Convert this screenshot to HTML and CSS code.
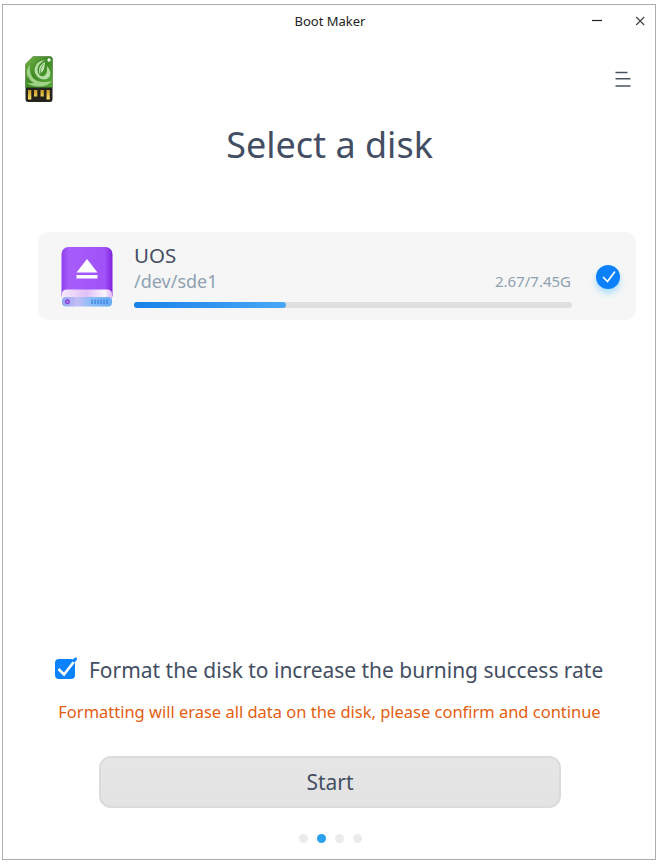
FILE: index.html
```html
<!DOCTYPE html>
<html lang="en">
<head>
<meta charset="utf-8">
<title>Boot Maker</title>
<link rel="stylesheet" href="styles.css">
</head>
<body>
<div class="window">
  <header class="titlebar">
    <span class="caption">Boot Maker</span>
    <svg class="controls" width="60" height="20" viewBox="0 0 60 20"><path d="M0 7.500h10" stroke="#222" stroke-width="1.200"/><path d="M44.200 4l8 8M52.200 4l-8 8" stroke="#444" stroke-width="1.200"/></svg>
  </header>
  <div class="toolbar">
    <svg class="logo" width="28" height="47" viewBox="0 0 28 47">
      <defs>
        <linearGradient id="green" x1="0" y1="0" x2="1" y2="1"><stop offset="0" stop-color="#7ab84c"/><stop offset=".45" stop-color="#3f8a24"/><stop offset="1" stop-color="#57a838"/></linearGradient>
        <linearGradient id="gold" x1="0" y1="0" x2="0" y2="1"><stop offset="0" stop-color="#c99a20"/><stop offset="1" stop-color="#fbe070"/></linearGradient>
      </defs>
      <path d="M8 .5H25Q27.500 .5 27.500 3V43Q27.500 46 25 46H3Q.5 46 .5 43V8Z" fill="#23221b"/>
      <path d="M8 .5H25Q27.500 .5 27.500 3V31.500H.5V8Z" fill="url(#green)"/>
      <path d="M.5 26Q7 31 15 30.500Q23 30 27 25Q14 28 8 22Q4 17 5 9Q1 13 2 19Q4 24 9 27Q4 28 .5 26Z" fill="#9fd186"/>
      <path d="M22 10Q27 16 24.500 21Q21 25 15 22.500Q9 19 9.500 13Q11 5 20 4Q12.500 8 12.500 14Q13 20 18 20.500Q23 19 22 10Z" fill="#b7dfa5"/>
      <path d="M20 6Q12 10 14.500 18Q20 15 20 6Z" fill="#c9e8bc"/>
      <path d="M18.500 8Q15 12 15.500 17" fill="none" stroke="#4b962f" stroke-width=".8"/>
      <circle cx="24" cy="4" r="1.700" fill="#f6fdf3"/>
      <path d="M3 34h3.300v9.500H3zM9 34h3.300v6.500H9zM15.500 34h3.300v6.500h-3.300zM21.500 34h3.300v9.500h-3.300z" fill="url(#gold)"/>
    </svg>
    <svg class="menu" width="16" height="16" viewBox="0 0 16 16"><path d="M.5 1.500H12.500M.5 7.700H15.500M.5 15H15.500" stroke="#4b5360" stroke-width="1.400"/></svg>
  </div>
  <h1 class="title">Select a disk</h1>
  <section class="disk">
    <svg class="drive" width="54" height="62" viewBox="0 0 54 62">
      <defs>
        <linearGradient id="case"><stop offset="0" stop-color="#9140ee"/><stop offset=".15" stop-color="#a65cfa"/><stop offset=".85" stop-color="#a152f8"/><stop offset="1" stop-color="#7d22dc"/></linearGradient>
        <linearGradient id="lip"><stop offset="0" stop-color="#f7eafe"/><stop offset=".5" stop-color="#e0bff6"/><stop offset=".85" stop-color="#fbf4fe"/><stop offset="1" stop-color="#e0b9f7"/></linearGradient>
        <linearGradient id="base"><stop offset="0" stop-color="#8ba8f4"/><stop offset=".3" stop-color="#c5bdf5"/><stop offset=".6" stop-color="#86bdf8"/><stop offset="1" stop-color="#6aabf4"/></linearGradient>
      </defs>
      <rect x="1.500" y="1" width="51" height="55" rx="7" fill="url(#case)"/>
      <path d="M2 48Q2 43.500 7 43.500H47Q52 43.500 52 48V54H2Z" fill="url(#lip)"/>
      <rect x="2" y="51" width="50" height="9.500" rx="4" fill="url(#base)"/>
      <circle cx="7.500" cy="55.700" r="1.700" fill="none" stroke="#9036d5" stroke-width="1.500"/>
      <path d="M32 53.500v4.500M35 53.500v4.500M38 53.500v4.500M41 53.500v4.500M44 53.500v4.500M47 53.500v4.500" stroke="#3c82e4" stroke-width="1.300"/>
      <path d="M27 13L37.500 26.500H16.500ZM16.500 29h21v3.500h-21z" fill="#fff"/>
    </svg>
    <div class="details">
      <div class="name">UOS</div>
      <div class="meta"><span class="path">/dev/sde1</span><span class="usage">2.67/7.45G</span></div>
      <div class="bar"><div class="fill"></div></div>
    </div>
    <div class="selected"><svg width="24" height="24" viewBox="0 0 24 24"><path d="M7 12l4.500 4.500 7.500-10" fill="none" stroke="#fff" stroke-width="1.700"/></svg></div>
  </section>
  <div class="format">
    <svg class="checkbox" width="24" height="24" viewBox="0 0 24 24"><rect x="1" y="3" width="20" height="20" rx="4" fill="#0a82fb"/><path d="M4.500 13l5.500 5.500L20.500 5" fill="none" stroke="#fff" stroke-width="2.600"/><path d="M20 4.800L21.500 3" stroke="#0a82fb" stroke-width="3" stroke-linecap="round"/></svg>
    <span class="format-label">Format the disk to increase the burning success rate</span>
  </div>
  <p class="warning">Formatting will erase all data on the disk, please confirm and continue</p>
  <button class="start">Start</button>
  <div class="pager"><i class="dot"></i><i class="dot active"></i><i class="dot"></i><i class="dot"></i></div>
</div>
</body>
</html>
```
FILE: styles.css
```css
* { box-sizing: border-box; }
body { margin: 0; background: #fff; font-family: "Noto Sans", sans-serif; color: #434e63; }
.window { width: 654px; height: 856px; margin: 4px 0 0 2px; border: 1px solid #acacac; display: flex; flex-direction: column; }
.titlebar { display: grid; grid-template-columns: 1fr auto 1fr; height: 46px; padding-left: 2px; }
.caption { grid-column: 2; font-size: 13px; line-height: 32px; color: #222; white-space: nowrap; }
.controls { justify-self: end; margin: 8px 3px 0 0; }
.toolbar { display: flex; justify-content: space-between; padding: 5px 24px 0 22px; height: 69px; }
.menu { margin-top: 15px; }
.title { margin: 0; padding-left: 1px; height: 112px; text-align: center; font-size: 36px; font-weight: 400; line-height: 50px; }
.disk { display: flex; margin: 0 19px 0 35px; width: 598px; height: 88px; background: #f6f6f6; border-radius: 11px; }
.drive { margin: 14px 0 0 22px; }
.details { margin-left: 20px; width: 438px; padding: 8px 0 0; }
.name { font-size: 20.500px; line-height: 31px; }
.meta { display: flex; justify-content: space-between; margin-top: -2px; padding-right: 1px; line-height: 24px; color: #8fa1b1; }
.path { font-size: 18px; }
.usage { font-size: 15px; }
.bar { height: 6px; margin-top: 9px; background: #dfdfdf; border-radius: 3px; overflow: hidden; }
.fill { width: 152px; height: 6px; background: linear-gradient(90deg, #1981e8, #49a8f5); border-radius: 0 3px 3px 0; }
.selected { width: 24px; height: 24px; margin: 33px 0 0 24px; border-radius: 50%; background: #0a80fa; box-shadow: 0 4px 6px #7dd0ffaa; }
.format { display: flex; margin: 333px 0 0 51px; height: 34px; }
.checkbox { margin-top: 3px; }
.format-label { margin-left: 11px; font-size: 20.960px; line-height: 34px; white-space: nowrap; }
.warning { margin: 12px 0 0; padding-left: 1px; text-align: center; font-size: 16.480px; line-height: 26px; color: #e35e12; white-space: nowrap; }
.start { width: 462px; height: 52px; margin: 31px 0 0 96px; border: 2px solid #dbdbdb; border-radius: 12px; background: linear-gradient(#e6e6e6, #e3e3e3); font: 21px/46px "Noto Sans", sans-serif; color: #434e63; padding: 0; }
.pager { display: flex; justify-content: center; gap: 9px; margin: 26px 0 0; padding-left: 2px; }
.dot { width: 9px; height: 9px; border-radius: 50%; background: #ebebee; }
.dot.active { background: #2ca0ec; }
```
